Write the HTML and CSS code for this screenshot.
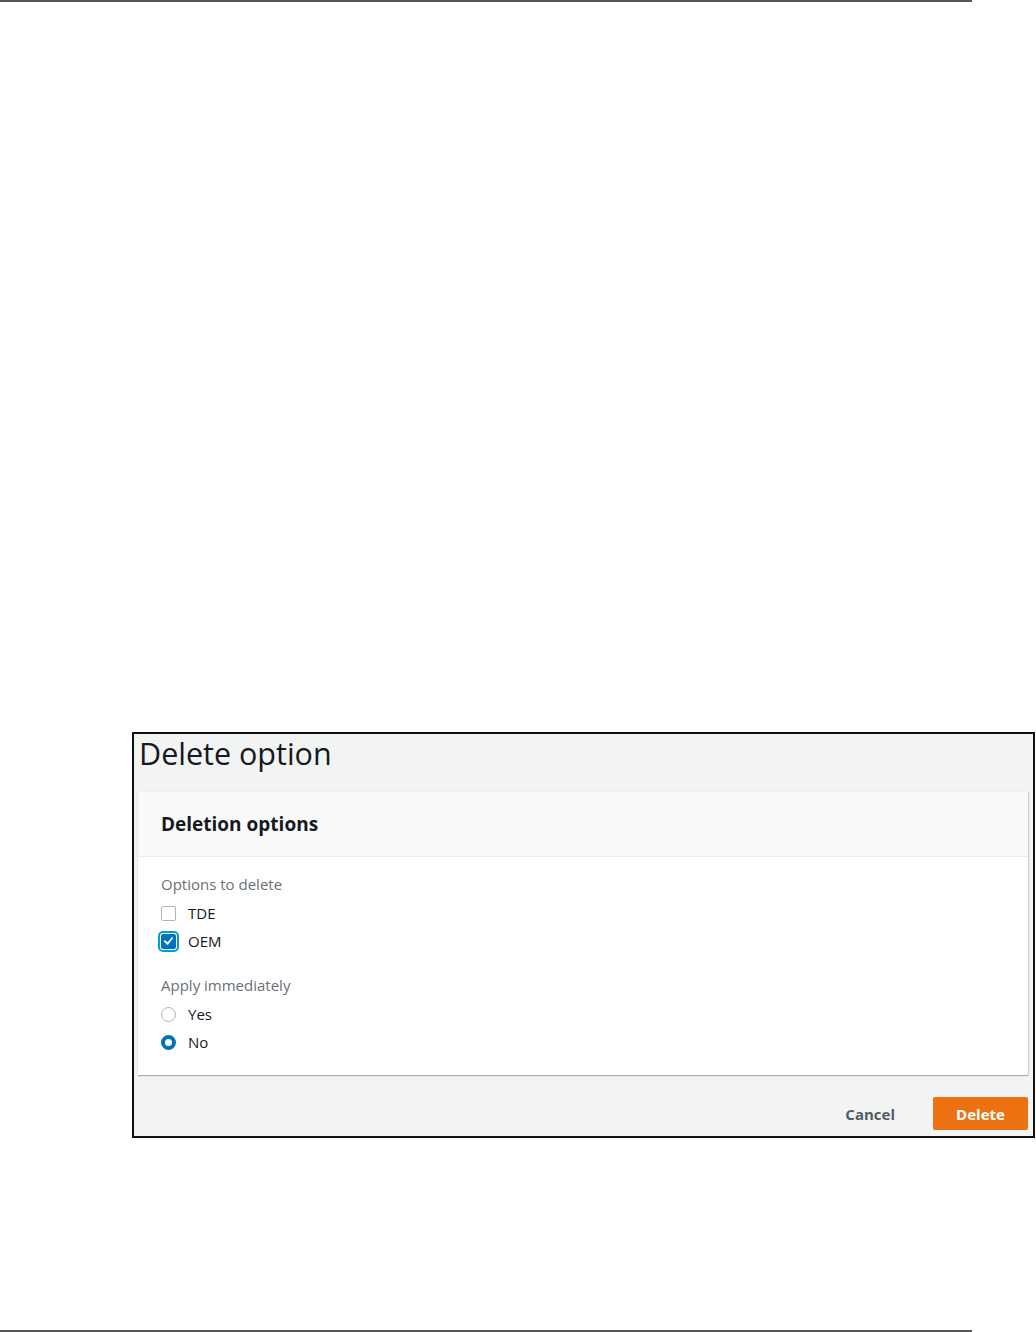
FILE: index.html
```html
<!doctype html>
<html lang="en">
    <head>
        <meta charset="UTF-8" />
        <meta name="viewport" content="width=device-width, initial-scale=1.0" />
        <title>Delete option</title>
        <link rel="stylesheet" href="styles.css">
    </head>
    <body>
        <div class="page">
            <div class="rule"></div>

            <div class="dialog">
                <h1 class="dialog-title">Delete option</h1>

                <div class="panel">
                    <div class="panel-header">
                        <h2>Deletion options</h2>
                    </div>
                    <div class="panel-body">
                        <div class="field-label">Options to delete</div>
                        <label class="choice">
                            <span class="checkbox"></span>
                            <span>TDE</span>
                        </label>
                        <label class="choice">
                            <span class="checkbox checked focused">
                                <svg viewBox="0 0 14 14" width="14" height="14">
                                    <path d="M3 7.2 L6 10 L11 3.8" fill="none" stroke="#fff" stroke-width="2" stroke-linecap="round" stroke-linejoin="round" />
                                </svg>
                            </span>
                            <span>OEM</span>
                        </label>

                        <div class="field-label spaced">Apply immediately</div>
                        <label class="choice">
                            <span class="radio"></span>
                            <span>Yes</span>
                        </label>
                        <label class="choice">
                            <span class="radio selected"></span>
                            <span>No</span>
                        </label>
                    </div>
                </div>

                <div class="dialog-footer">
                    <button class="btn-link">Cancel</button>
                    <button class="btn-primary">Delete</button>
                </div>
            </div>

            <div class="rule bottom"></div>
        </div>
    </body>
</html>
```

FILE: styles.css
```css
body {
    margin: 0;
    background-color: #fff;
    font-family: "Open Sans", "Noto Sans", Arial, sans-serif;
    color: #16191f;
}
.page {
    height: 1332px;
    display: flex;
    flex-direction: column;
}
.rule {
    width: 972px;
    height: 2px;
    background-color: #555;
}
.rule.bottom {
    margin-top: auto;
}
.dialog {
    margin: 730px 1px 0 132px;
    height: 402px;
    border: 2px solid #111;
    background-color: #f2f3f3;
    display: flex;
    flex-direction: column;
}
.dialog-title {
    margin: 0;
    padding: 0 0 0 5px;
    height: 58px;
    font-size: 30.5px;
    line-height: 38px;
    font-weight: 400;
    color: #16191f;
}
.panel {
    margin: 0 5px 0 4px;
    background-color: #fff;
    box-shadow: 0 1px 1px rgba(0, 22, 40, 0.3), 1px 0 1px rgba(0, 22, 40, 0.12);
}
.panel-header {
    height: 64px;
    background-color: #fafafa;
    border-bottom: 1px solid #eaeded;
    display: flex;
    align-items: center;
    padding: 0 23px;
}
.panel-header h2 {
    margin: 0;
    font-size: 19px;
    font-weight: 700;
    color: #16191f;
}
.panel-body {
    padding: 16px 23px 19px;
}
.field-label {
    font-size: 15px;
    line-height: 22px;
    color: #687078;
    margin-bottom: 4px;
}
.field-label.spaced {
    margin-top: 19px;
}
.choice {
    display: flex;
    align-items: center;
    height: 28px;
    font-size: 15px;
    color: #16191f;
}
.choice span:last-child {
    margin-left: 12px;
}
.checkbox {
    width: 15px;
    height: 15px;
    border: 1px solid #aab7b8;
    border-radius: 2px;
    display: flex;
    align-items: center;
    justify-content: center;
    box-sizing: border-box;
}
.checkbox.checked {
    background-color: #0073bb;
    border-color: #0073bb;
}
.checkbox.focused {
    box-shadow: 0 0 0 1px #fff, 0 0 0 3px #00a1c9;
}
.radio {
    width: 15px;
    height: 15px;
    border: 1px solid #aab7b8;
    border-radius: 50%;
    box-sizing: border-box;
}
.radio.selected {
    border: 4px solid #0073bb;
}
.dialog-footer {
    margin-top: auto;
    display: flex;
    justify-content: flex-end;
    align-items: center;
    padding: 0 5px 6px 0;
    gap: 38px;
}
.btn-link {
    border: none;
    background: none;
    font-family: inherit;
    font-size: 15px;
    font-weight: 700;
    color: #545b64;
    padding: 0;
}
.btn-primary {
    border: none;
    border-radius: 2px;
    background-color: #ec7211;
    color: #fff;
    font-family: inherit;
    font-size: 15px;
    font-weight: 700;
    width: 95px;
    height: 33px;
    padding: 0;
}
```
